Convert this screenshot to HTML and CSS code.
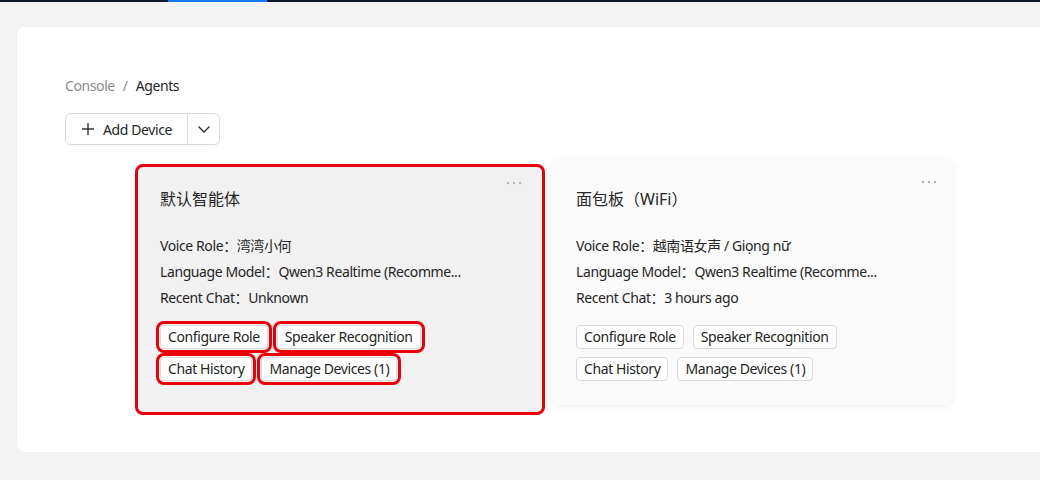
FILE: index.html
```html
<!DOCTYPE html>
<html lang="zh-CN">
<head>
<meta charset="utf-8">
<title>Agents</title>
<link rel="stylesheet" href="styles.css">
</head>
<body>
<header class="topbar"><span class="topbar-active"></span></header>
<main class="page">
  <section class="panel">
    <nav class="breadcrumb">
      <span class="crumb-muted">Console</span>
      <span class="crumb-sep">/</span>
      <span class="crumb-current">Agents</span>
    </nav>
    <div class="split-btn">
      <button class="split-main">
        <svg class="plus" width="14" height="14" viewBox="0 0 14 14"><path d="M7 1v12M1 7h12" stroke="#333" stroke-width="1.4" fill="none"/></svg>
        <span>Add Device</span>
      </button>
      <button class="split-drop">
        <svg width="14" height="14" viewBox="0 0 14 14"><path d="M1.5 4.5L7 10l5.5-5.5" stroke="#333" stroke-width="1.4" fill="none"/></svg>
      </button>
    </div>
    <div class="cards">
      <article class="card card-hover">
        <svg class="more" width="16" height="4" viewBox="0 0 16 4"><circle cx="2" cy="2" r="1.2" fill="#b5b5b5"/><circle cx="8" cy="2" r="1.2" fill="#b5b5b5"/><circle cx="14" cy="2" r="1.2" fill="#b5b5b5"/></svg>
        <h3 class="card-title">默认智能体</h3>
        <ul class="info">
          <li>Voice Role：湾湾小何</li>
          <li>Language Model：Qwen3 Realtime (Recomme...</li>
          <li>Recent Chat：Unknown</li>
        </ul>
        <div class="actions">
          <button class="act marked">Configure Role</button>
          <button class="act marked">Speaker Recognition</button>
          <button class="act marked">Chat History</button>
          <button class="act marked">Manage Devices (1)</button>
        </div>
      </article>
      <article class="card">
        <svg class="more" width="16" height="4" viewBox="0 0 16 4"><circle cx="2" cy="2" r="1.2" fill="#b5b5b5"/><circle cx="8" cy="2" r="1.2" fill="#b5b5b5"/><circle cx="14" cy="2" r="1.2" fill="#b5b5b5"/></svg>
        <h3 class="card-title">面包板（WiFi）</h3>
        <ul class="info">
          <li>Voice Role：越南语女声 / Giọng nữ</li>
          <li>Language Model：Qwen3 Realtime (Recomme...</li>
          <li>Recent Chat：3 hours ago</li>
        </ul>
        <div class="actions">
          <button class="act">Configure Role</button>
          <button class="act">Speaker Recognition</button>
          <button class="act">Chat History</button>
          <button class="act">Manage Devices (1)</button>
        </div>
      </article>
    </div>
  </section>
</main>
</body>
</html>
```

FILE: styles.css
```css
* { box-sizing: border-box; }
html, body { margin: 0; padding: 0; }
body {
  width: 1040px;
  height: 480px;
  overflow: hidden;
  background: #f3f3f4;
  font-family: "Noto Sans", "Noto Sans CJK SC", sans-serif;
  color: #262626;
  font-size: 14px;
  letter-spacing: -0.4px;
}
.topbar {
  height: 2px;
  background: #0b1526;
  position: relative;
}
.topbar-active {
  position: absolute;
  left: 168px;
  top: 0;
  width: 99px;
  height: 2px;
  background: #1677ff;
}
.page {
  padding: 25px 0 0 17px;
}
.panel {
  width: 1060px;
  height: 425px;
  background: #fff;
  border-radius: 8px;
  padding: 48px 48px;
}
.breadcrumb {
  display: flex;
  align-items: center;
  gap: 8px;
  height: 22px;
  line-height: 22px;
}
.crumb-muted, .crumb-sep { color: #8c8c8c; }
.crumb-current { color: #262626; }
.split-btn {
  margin-top: 16px;
  display: inline-flex;
  height: 32px;
  border: 1px solid #d9d9d9;
  border-radius: 6px;
  background: #fff;
  box-shadow: 0 2px 0 rgba(0,0,0,0.02);
}
.split-btn button {
  font: inherit;
  letter-spacing: inherit;
  color: #262626;
  background: transparent;
  border: 0;
  display: flex;
  align-items: center;
  padding: 0;
}
.split-main {
  width: 122px;
  padding-left: 15px !important;
  gap: 8px;
  border-right: 1px solid #d9d9d9 !important;
}
.split-drop {
  width: 31px;
  justify-content: center;
}
.cards {
  margin-top: 14px;
  margin-left: 70px;
  display: grid;
  grid-template-columns: 410px 402px;
  gap: 6px;
  align-items: start;
}
.card {
  position: relative;
  background: #fafafa;
  border-radius: 8px;
  padding: 28px 25px 24px;
  box-shadow: 0 1px 6px rgba(0,0,0,0.08);
}
.card-hover {
  margin-top: 5px;
  padding: 23px 25px 34px;
  background: #f1f1f1;
  outline: 3px solid #e8000b;
  outline-offset: -3px;
  box-shadow: none;
}
.more {
  position: absolute;
  top: 21px;
  right: 16px;
}
.card-hover .more {
  top: 17px;
  right: 23px;
}
.card-title {
  margin: 0;
  font-size: 16px;
  font-weight: 400;
  letter-spacing: 0;
  line-height: 24px;
  color: #262626;
}
.info {
  list-style: none;
  margin: 22px 0 0;
  padding: 0;
  line-height: 26px;
  white-space: nowrap;
}
.actions {
  margin-top: 14px;
  display: flex;
  flex-wrap: wrap;
  gap: 8px 9px;
  width: 280px;
}
.act {
  font: inherit;
  letter-spacing: inherit;
  color: #262626;
  background: #fff;
  border: 1px solid #d9d9d9;
  border-radius: 4px;
  height: 24px;
  line-height: 22px;
  padding: 0 7px;
}
.act.marked {
  outline: 3px solid #e8000b;
  outline-offset: 1px;
}
```
